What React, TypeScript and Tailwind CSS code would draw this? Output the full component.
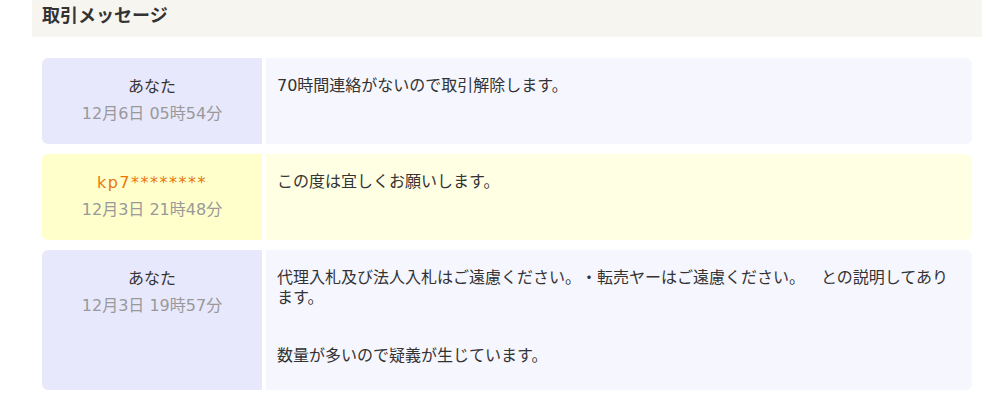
type Message = {
  id: number;
  name: string;
  date: string;
  mine: boolean;
  body: string;
};

const messages: Message[] = [
  { id: 1, name: "あなた", date: "12月6日 05時54分", mine: true, body: "70時間連絡がないので取引解除します。" },
  { id: 2, name: "kp7********", date: "12月3日 21時48分", mine: false, body: "この度は宜しくお願いします。" },
  {
    id: 3,
    name: "あなた",
    date: "12月3日 19時57分",
    mine: true,
    body: "代理入札及び法人入札はご遠慮ください。・転売ヤーはご遠慮ください。\u3000との説明してあります。\n\n\n数量が多いので疑義が生じています。",
  },
];

const MessageRow = ({ msg }: { msg: Message }) => {
  return (
    <div className="flex min-h-[86px] rounded-md overflow-hidden bg-white gap-[4px]">
      <div
        className={`w-[220px] shrink-0 flex flex-col items-center pt-[15px] text-[16px] leading-[27px] ${
          msg.mine ? "bg-[#e8e8fd]" : "bg-[#ffffcc]"
        }`}
      >
        <div className={msg.mine ? "text-[#333333]" : "text-[#e8780c] tracking-[1.5px]"}>{msg.name}</div>
        <div className="text-[#999999]">{msg.date}</div>
      </div>
      <div
        className={`flex-1 pl-[11px] pr-[11px] pt-[18px] pb-[24px] text-[16px] leading-[19.5px] text-[#333333] whitespace-pre-wrap [text-spacing-trim:space-all] ${
          msg.mine ? "bg-[#f6f6fe]" : "bg-[#ffffe4]"
        }`}
      >
        {msg.body}
      </div>
    </div>
  );
};

export default function App() {
  return (
    <div
      className="w-[995px] h-[400px] bg-white overflow-hidden [text-spacing-trim:space-all]"
      style={{ fontFamily: '"DejaVu Sans", "Noto Sans CJK JP", sans-serif' }}
    >
      <div className="ml-[32px] w-[950px]">
        <div className="h-[37px] bg-[#f6f5f0] pl-[10px] pt-[5px]">
          <h2 className="text-[18px] leading-[22px] font-bold text-[#333333]">取引メッセージ</h2>
        </div>
        <div className="mx-[10px] mt-[21px] flex flex-col gap-[10px]">
          {messages.map((m) => (
            <MessageRow key={m.id} msg={m} />
          ))}
        </div>
      </div>
    </div>
  );
}
